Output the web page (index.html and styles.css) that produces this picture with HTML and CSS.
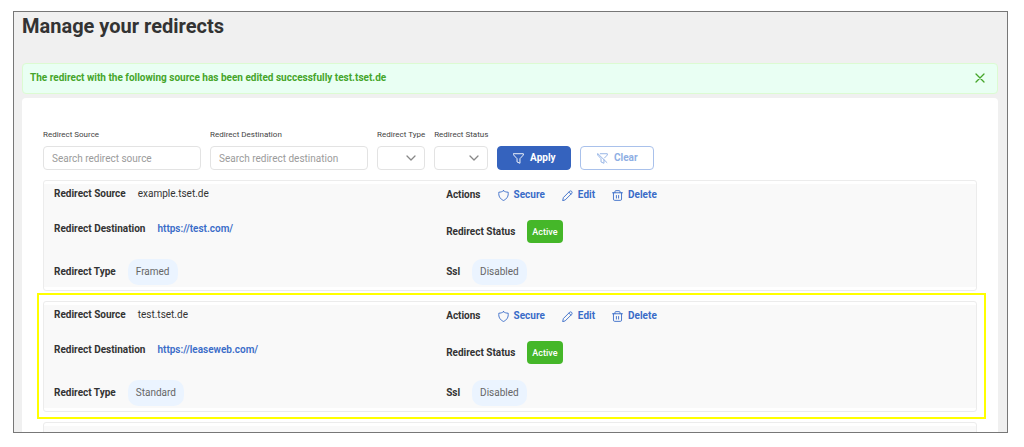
FILE: index.html
```
<!DOCTYPE html>
<html lang="en">
<head>
    <meta charset="UTF-8">
    <meta name="viewport" content="width=device-width, initial-scale=1.0">
    <title>Manage your redirects</title>
    <link rel="stylesheet" href="styles.css">
</head>
<body>
    <!-- shared icons -->
    <svg class="sprite" aria-hidden="true">
        <symbol id="icon-shield" viewBox="0 0 12 12">
            <path d="M6 .8 C4.6 1.9 2.8 2.4 .9 2.4 C.4 6.6 2.2 9.8 6 11.4 C9.8 9.8 11.6 6.6 11.1 2.4 C9.2 2.4 7.4 1.9 6 .8 Z"/>
        </symbol>
        <symbol id="icon-pencil" viewBox="0 0 12 12">
            <path d="M.8 11.2 L1.5 8.2 L8.4 1.3 C9.8 .1 11.9 2.2 10.7 3.6 L3.8 10.5 Z M7.5 2.3 L9.7 4.5"/>
        </symbol>
        <symbol id="icon-trash" viewBox="0 0 12 12">
            <path d="M.6 3 H11.4 M3.2 3 V1.8 Q3.2 .7 4.3 .7 H7.7 Q8.8 .7 8.8 1.8 V3 M1.6 3 V10 Q1.6 11.3 2.9 11.3 H9.1 Q10.4 11.3 10.4 10 V3 M4.8 6 V8.8 M7.2 6 V8.8"/>
        </symbol>
        <symbol id="icon-filter" viewBox="0 0 12 12">
            <path d="M.7 .8 H11.3 V2.2 L7.6 6.2 V11.2 L4.4 9.8 V6.2 L.7 2.2 Z"/>
        </symbol>
        <symbol id="icon-filter-off" viewBox="0 0 12 12">
            <path d="M3.6 .8 H11.3 V2.2 L8.2 5.4 M.7 1.2 V2.2 L4.4 6.2 V9.8 L7.6 11.2 V7.4 M.8 .6 L10.8 10.4"/>
        </symbol>
        <symbol id="icon-chevron" viewBox="0 0 10 6">
            <path d="M1 1 L5 5 L9 1"/>
        </symbol>
        <symbol id="icon-close" viewBox="0 0 10 10">
            <path d="M1 1 L9 9 M9 1 L1 9"/>
        </symbol>
    </svg>

    <main class="page">
        <h1>Manage your redirects</h1>

        <div class="alert" role="status">
            <span>The redirect with the following source has been edited successfully test.tset.de</span>
            <button type="button" class="alert-close" aria-label="Close"><svg><use href="#icon-close"/></svg></button>
        </div>

        <section class="panel">
            <form class="filters">
                <div class="field">
                    <label for="source">Redirect Source</label>
                    <input type="text" id="source" placeholder="Search redirect source">
                </div>
                <div class="field">
                    <label for="destination">Redirect Destination</label>
                    <input type="text" id="destination" placeholder="Search redirect destination">
                </div>
                <div class="field field-select">
                    <label for="type">Redirect Type</label>
                    <select id="type"><option></option></select>
                    <svg class="chevron"><use href="#icon-chevron"/></svg>
                </div>
                <div class="field field-select">
                    <label for="status">Redirect Status</label>
                    <select id="status"><option></option></select>
                    <svg class="chevron"><use href="#icon-chevron"/></svg>
                </div>
                <button type="button" class="btn btn-primary"><svg><use href="#icon-filter"/></svg>Apply</button>
                <button type="button" class="btn btn-outline"><svg><use href="#icon-filter-off"/></svg>Clear</button>
            </form>

            <div class="redirects">
                <article class="redirect">
                    <div class="redirect-body">
                        <div class="item item-source"><b>Redirect Source</b><span>example.tset.de</span></div>
                        <div class="item item-actions">
                            <b>Actions</b>
                            <div class="actions">
                                <button type="button"><svg><use href="#icon-shield"/></svg>Secure</button>
                                <button type="button"><svg><use href="#icon-pencil"/></svg>Edit</button>
                                <button type="button"><svg><use href="#icon-trash"/></svg>Delete</button>
                            </div>
                        </div>
                        <div class="item item-destination"><b>Redirect Destination</b><a href="https://test.com/">https://test.com/</a></div>
                        <div class="item"><b>Redirect Status</b><span class="status">Active</span></div>
                        <div class="item"><b>Redirect Type</b><span class="tag">Framed</span></div>
                        <div class="item"><b>Ssl</b><span class="tag">Disabled</span></div>
                    </div>
                </article>

                <article class="redirect highlighted">
                    <div class="redirect-body">
                        <div class="item item-source"><b>Redirect Source</b><span>test.tset.de</span></div>
                        <div class="item item-actions">
                            <b>Actions</b>
                            <div class="actions">
                                <button type="button"><svg><use href="#icon-shield"/></svg>Secure</button>
                                <button type="button"><svg><use href="#icon-pencil"/></svg>Edit</button>
                                <button type="button"><svg><use href="#icon-trash"/></svg>Delete</button>
                            </div>
                        </div>
                        <div class="item item-destination"><b>Redirect Destination</b><a href="https://leaseweb.com/">https://leaseweb.com/</a></div>
                        <div class="item"><b>Redirect Status</b><span class="status">Active</span></div>
                        <div class="item"><b>Redirect Type</b><span class="tag">Standard</span></div>
                        <div class="item"><b>Ssl</b><span class="tag">Disabled</span></div>
                    </div>
                </article>

                <!-- next entry, cut off by the page frame -->
                <article class="redirect">
                    <div class="redirect-body"></div>
                </article>
            </div>
        </section>
    </main>
</body>
</html>
```
FILE: styles.css
```
* {
    box-sizing: border-box;
}
body {
    display: flex;
    height: 100vh;
    margin: 0;
    padding: 11px 16px 14px 13px;
    background-color: #ffffff;
    color: #333333;
    font-family: Roboto, "Liberation Sans", sans-serif;
    font-size: 10px;
    line-height: 12px;
}
svg {
    fill: none;
    stroke: currentColor;
    stroke-linecap: round;
    stroke-linejoin: round;
}
.sprite {
    display: none;
}
button, input, select {
    font: inherit;
}
button {
    cursor: pointer;
}
.page {
    flex: 1;
    min-width: 0;
    padding: 0 9px 0 8px;
    border: 1px solid #777777;
    background-color: #f0f0f0;
    overflow: hidden;
}
h1 {
    margin: 2px 0 25px;
    font-size: 20px;
    line-height: 24px;
    font-weight: 700;
}

/* success message */
.alert {
    display: flex;
    align-items: center;
    justify-content: space-between;
    height: 31px;
    padding: 0 12px 2px 7px;
    border: 1px solid #dcfbd2;
    border-radius: 4px;
    background-color: #e9fff3;
    color: #45a52a;
    font-weight: 700;
}
.alert-close {
    display: flex;
    padding: 0;
    border: none;
    background: none;
    color: #45a52a;
}
.alert-close svg {
    width: 10px;
    height: 10px;
    stroke-width: 1.3;
}

.panel {
    margin-top: 4px;
    padding: 31px 21px;
    border-radius: 4px;
    background-color: #ffffff;
}

/* filters */
.filters {
    display: flex;
    align-items: flex-end;
    gap: 9px;
}
.field {
    display: flex;
    flex-direction: column;
    flex: 0 1 158px;
}
.field label {
    margin-bottom: 5px;
    font-size: 8px;
    white-space: nowrap;
    color: #444444;
}
.field input, .field select {
    width: 100%;
    height: 24px;
    padding: 0 8px;
    border: 1px solid #e3e3e3;
    border-radius: 4px;
    background-color: #ffffff;
}
.field input::placeholder {
    color: #9b9b9b;
}
.field-select {
    position: relative;
    flex: 0 0 auto;
}
.field select {
    appearance: none;
}
.chevron {
    position: absolute;
    right: 9px;
    bottom: 9px;
    width: 10px;
    height: 6px;
    color: #888888;
    stroke-width: 1.3;
    pointer-events: none;
}
.btn {
    display: flex;
    align-items: center;
    justify-content: center;
    gap: 6px;
    width: 74px;
    height: 24px;
    padding: 0;
    border: 1px solid #3563be;
    border-radius: 4px;
    font-weight: 700;
}
.btn svg {
    width: 11px;
    height: 11px;
}
.btn-primary {
    background-color: #3563be;
    color: #ffffff;
}
.btn-outline {
    border-color: #a9c1eb;
    background-color: #ffffff;
    color: #8fafe4;
}

/* redirect list */
.redirects {
    display: grid;
    gap: 10px;
    margin-top: 10px;
}
.redirect {
    position: relative;
    padding: 3px 0;
    border: 1px solid #ececec;
    border-radius: 3px;
}
.redirect-body {
    display: grid;
    grid-template-columns: 43% 1fr;
    grid-template-rows: 16px 23px 26px;
    row-gap: 16px;
    min-height: 103px;
    padding: 4px 10px 2px;
    background-color: #f9f9f9;
}
.highlighted::after {
    content: "";
    position: absolute;
    inset: -9px -10px -8px -7px;
    border: 2px solid #ffff00;
    pointer-events: none;
}
.item {
    display: flex;
    align-items: center;
    gap: 12px;
}
.item-source {
    align-items: flex-start;
}
.item-actions {
    align-self: start;
    gap: 17px;
    height: 14px;
}
.item-destination {
    align-items: flex-start;
    padding-top: 3px;
}
.item a {
    color: #3a6cc8;
    font-weight: 600;
    text-decoration: none;
}
.actions {
    display: flex;
    gap: 17px;
}
.actions button {
    display: flex;
    align-items: center;
    gap: 5px;
    padding: 0;
    border: none;
    background: none;
    color: #3a6cc8;
    font-weight: 700;
}
.actions svg {
    width: 11px;
    height: 11px;
}
.status {
    display: flex;
    align-items: center;
    height: 23px;
    padding: 0 5px;
    border-radius: 4px;
    background-color: #45b729;
    color: #ffffff;
    font-size: 9px;
    font-weight: 500;
}
.tag {
    padding: 7px 8px;
    border-radius: 10px;
    background-color: #ebf4ff;
    color: #666666;
}
```
